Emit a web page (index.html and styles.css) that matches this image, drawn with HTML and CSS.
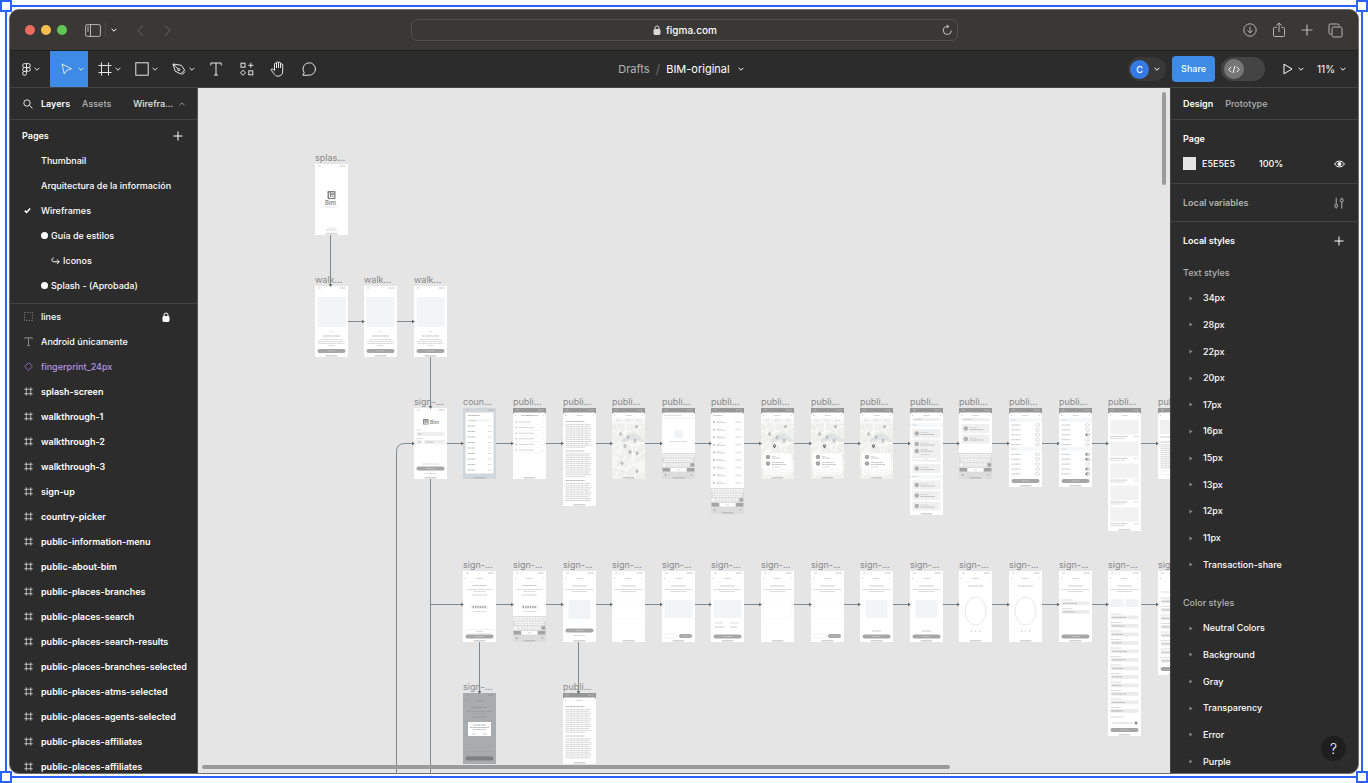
FILE: index.html
```html
<!DOCTYPE html>
<html lang="es">
<head>
    <meta charset="UTF-8">
    <title>BIM-original</title>
    <link rel="stylesheet" href="styles.css">
</head>
<body>
    <svg class="sprite" aria-hidden="true">
        <symbol id="i-chev" viewBox="0 0 6 6"><path d="M.6 1.8 3 4.2 5.4 1.8"/></symbol>
        <symbol id="i-up" viewBox="0 0 6 6"><path d="M.6 4.2 3 1.8 5.4 4.2"/></symbol>
        <symbol id="i-plus" viewBox="0 0 10 10"><path d="M5 .5v9M.5 5h9"/></symbol>
        <symbol id="i-frame" viewBox="0 0 14 14"><path d="M3.5.5v13M10.500.5v13M.5 3.500h13M.5 10.500h13"/></symbol>
        <symbol id="i-lock" viewBox="0 0 8 10"><path d="M2 5V3a2 2 0 0 1 4 0v2"/><rect x="1" y="4.500" width="6" height="5" rx=".6" fill="currentColor"/></symbol>
        <symbol id="i-caret" viewBox="0 0 4 5"><path d="M.5.5v4L3.5 2.500z" fill="currentColor" stroke="none"/></symbol>
    </svg>

    <div class="selection">
        <i class="handle tl"></i><i class="handle tr"></i><i class="handle bl"></i><i class="handle br"></i>
    </div>

    <div class="window">
        <header class="titlebar">
            <div class="title-left">
                <span class="light red"></span><span class="light yellow"></span><span class="light green"></span>
                <button class="sidebar-btn" aria-label="Sidebar">
                    <svg width="16" height="13" viewBox="0 0 16 13"><rect x=".6" y=".6" width="14.800" height="11.800" rx="1.500"/><path d="M5.500.6v11.800M2 3h2M2 5h2M2 7h2"/></svg>
                </button>
                <button class="sidebar-menu" aria-label="Tab groups"><svg class="chev"><use href="#i-chev"/></svg></button>
                <button class="nav-btn" aria-label="Back"><svg width="7" height="11" viewBox="0 0 7 11"><path d="M6 .5 1 5.500l5 5"/></svg></button>
                <button class="nav-btn" aria-label="Forward"><svg width="7" height="11" viewBox="0 0 7 11"><path d="m1 .5 5 5-5 5"/></svg></button>
            </div>
            <div class="address">
                <label for="url"><svg width="8" height="10"><use href="#i-lock"/></svg></label>
                <input id="url" type="text" value="figma.com" aria-label="Address">
                <button class="reload" aria-label="Reload"><svg width="11" height="12" viewBox="0 0 11 12"><path d="M6.500 2.500H5a4 4 0 1 0 4.300 4M4.800.6l2 1.900-2 2"/></svg></button>
            </div>
            <div class="title-right">
                <button aria-label="Downloads"><svg width="14" height="14" viewBox="0 0 14 14"><circle cx="7" cy="7" r="6.200"/><path d="M7 3.700v6M4.500 7.400 7 9.900l2.500-2.500"/></svg></button>
                <button aria-label="Share page"><svg width="14" height="16" viewBox="0 0 14 16"><path d="M4.500 5.500H2.500a1 1 0 0 0-1 1v7a1 1 0 0 0 1 1h9a1 1 0 0 0 1-1v-7a1 1 0 0 0-1-1h-2M7 10V1M4.300 3.500 7 .9l2.700 2.600"/></svg></button>
                <button aria-label="New tab"><svg width="12" height="12"><use href="#i-plus"/></svg></button>
                <button aria-label="Tabs"><svg width="15" height="15" viewBox="0 0 15 15"><rect x="4" y="4" width="10" height="10" rx="1.500"/><path d="M3.500 11H2.200A1.200 1.200 0 0 1 1 9.800V2.200A1.200 1.200 0 0 1 2.200 1h7.600A1.200 1.200 0 0 1 11 2.200v1.300"/></svg></button>
            </div>
        </header>

        <div class="toolbar">
            <div class="tools">
                <button class="tool menu" aria-label="Main menu">
                    <svg width="9" height="13" viewBox="0 0 9 13"><path d="M4.500.6H2.600a1.950 1.950 0 0 0 0 3.900h1.900zM4.500.6h1.900a1.950 1.950 0 0 1 0 3.900H4.500zM4.500 4.500H2.600a1.950 1.950 0 0 0 0 3.900h1.900zM4.500 8.400H2.600a1.950 1.950 0 1 0 1.900 2z"/><circle cx="6.400" cy="6.450" r="1.900"/></svg>
                    <svg class="chev"><use href="#i-chev"/></svg>
                </button>
                <button class="tool active" aria-label="Move">
                    <svg width="14" height="14" viewBox="0 0 14 14"><path d="m2 2 9.500 4.800-4.600 1.400L4.300 12z"/></svg>
                    <svg class="chev"><use href="#i-chev"/></svg>
                </button>
                <button class="tool" aria-label="Frame"><svg width="14" height="14"><use href="#i-frame"/></svg><svg class="chev"><use href="#i-chev"/></svg></button>
                <button class="tool" aria-label="Rectangle"><svg width="14" height="14" viewBox="0 0 14 14"><rect x=".8" y=".8" width="12.400" height="12.400"/></svg><svg class="chev"><use href="#i-chev"/></svg></button>
                <button class="tool" aria-label="Pen"><svg width="14" height="14" viewBox="0 0 14 14"><path d="m1 2 2.200 7.200L8.800 12 12.600 8 9.300 3.300zM1 2l5.200 5M10 12.800l3-3.200"/><circle cx="6.800" cy="7.600" r="1.100"/></svg><svg class="chev"><use href="#i-chev"/></svg></button>
                <button class="tool single" aria-label="Text"><svg width="14" height="14" viewBox="0 0 14 14"><path d="M1.800 3.500V1h10.400v2.500M7 1v12M5 13h4"/></svg></button>
                <button class="tool single" aria-label="Resources"><svg width="14" height="14" viewBox="0 0 14 14"><rect x="1" y="1.200" width="4" height="4"/><rect x="8.800" y="8.800" width="4" height="4"/><path d="M10.800.8v5M8.300 3.300h5M3 8.200 5.500 10.800 3 13.300.500 10.800z"/></svg></button>
                <button class="tool single" aria-label="Hand"><svg width="16" height="16" viewBox="0 0 16 16"><path d="M4.500 9.500V3.200a1 1 0 0 1 2 0V7V1.800a1 1 0 0 1 2 0V7V2.200a1 1 0 0 1 2 0V7V4a1 1 0 0 1 2.200 0v6c0 3.200-1.700 5.200-4.700 5.200-2.200 0-3.300-.9-4.300-2.700L1.300 9.200c-.5-1 .6-1.900 1.500-1.100z"/></svg></button>
                <button class="tool single" aria-label="Comment"><svg width="14" height="14" viewBox="0 0 14 14"><path d="M.8 13.200h6.400A6.200 6.200 0 1 0 1 7c0 1.200.4 2.500 1.200 3.600z"/></svg></button>
            </div>
            <nav class="file-name">
                <a href="#">Drafts</a><span class="slash">/</span>
                <button>BIM-original<svg class="chev"><use href="#i-chev"/></svg></button>
            </nav>
            <div class="actions">
                <button class="account"><span class="avatar">C</span><svg class="chev"><use href="#i-chev"/></svg></button>
                <button class="share">Share</button>
                <label class="dev-mode"><input type="checkbox" aria-label="Dev mode"><span class="knob"><svg width="12" height="9" viewBox="0 0 12 9"><path d="M3.300 1.800.700 4.500l2.600 2.700M8.700 1.800l2.600 2.700-2.600 2.700M6.900.9 5.100 8.100"/></svg></span></label>
                <button class="play" aria-label="Present"><svg width="10" height="12" viewBox="0 0 10 12"><path d="m1 1.200 8 4.800-8 4.800z"/></svg><svg class="chev"><use href="#i-chev"/></svg></button>
                <button class="zoom">11%<svg class="chev"><use href="#i-chev"/></svg></button>
            </div>
        </div>

        <main class="workspace">
            <aside class="panel left">
                <div class="tabs">
                    <svg class="row-icon search" width="10" height="10" viewBox="0 0 10 10"><circle cx="4" cy="4" r="3.200"/><path d="m6.400 6.400 3 3"/></svg>
                    <button class="on">Layers</button>
                    <button>Assets</button>
                    <button class="page-name">Wirefra...<svg class="chev"><use href="#i-up"/></svg></button>
                </div>
                <section class="pages">
                    <div class="pages-head"><h2>Pages</h2><button aria-label="Add page"><svg width="10" height="10"><use href="#i-plus"/></svg></button></div>
                    <ul>
                        <li>Thumbnail</li>
                        <li>Arquitectura de la información</li>
                        <li class="current"><svg class="check" width="7" height="7" viewBox="0 0 7 7"><path d="m.8 3.600 1.800 1.800 3.600-3.800"/></svg>Wireframes</li>
                        <li><i class="dot"></i>Guía de estilos</li>
                        <li class="nested"><svg width="9" height="8" viewBox="0 0 9 8"><path d="M2.800.8C.3 1.300.3 4.800 3 4.800h5M6 2.500l2.300 2.300L6 7.100"/></svg>Iconos</li>
                        <li><i class="dot"></i>Splash - (Aprobada)</li>
                    </ul>
                </section>
                <ul class="layers">
                    <li class="plain"><svg class="row-icon" width="9" height="9" viewBox="0 0 9 9"><path d="M.5.5h8v8h-8z" stroke-dasharray="1 1.660"/></svg>lines<svg class="lock" width="8" height="10"><use href="#i-lock"/></svg></li>
                    <li class="plain"><svg class="row-icon" width="9" height="9" viewBox="0 0 9 9"><path d="M.8 2V.8h7.400V2M4.500.8v7.700M3.300 8.500h2.400"/></svg>Android únicamente</li>
                    <li class="plain component"><svg class="row-icon" width="9" height="9" viewBox="0 0 9 9"><path d="M4.500.6 8.400 4.500 4.500 8.400.6 4.500z"/></svg>fingerprint_24px</li>
                    <li><svg class="row-icon" width="9" height="9"><use href="#i-frame"/></svg>splash-screen</li>
                    <li><svg class="row-icon" width="9" height="9"><use href="#i-frame"/></svg>walkthrough-1</li>
                    <li><svg class="row-icon" width="9" height="9"><use href="#i-frame"/></svg>walkthrough-2</li>
                    <li><svg class="row-icon" width="9" height="9"><use href="#i-frame"/></svg>walkthrough-3</li>
                    <li><svg class="row-icon" width="9" height="9"><use href="#i-frame"/></svg>sign-up</li>
                    <li><svg class="row-icon" width="9" height="9"><use href="#i-frame"/></svg>country-picker</li>
                    <li><svg class="row-icon" width="9" height="9"><use href="#i-frame"/></svg>public-information-menu</li>
                    <li><svg class="row-icon" width="9" height="9"><use href="#i-frame"/></svg>public-about-bim</li>
                    <li><svg class="row-icon" width="9" height="9"><use href="#i-frame"/></svg>public-places-branches</li>
                    <li><svg class="row-icon" width="9" height="9"><use href="#i-frame"/></svg>public-places-search</li>
                    <li><svg class="row-icon" width="9" height="9"><use href="#i-frame"/></svg>public-places-search-results</li>
                    <li><svg class="row-icon" width="9" height="9"><use href="#i-frame"/></svg>public-places-branches-selected</li>
                    <li><svg class="row-icon" width="9" height="9"><use href="#i-frame"/></svg>public-places-atms-selected</li>
                    <li><svg class="row-icon" width="9" height="9"><use href="#i-frame"/></svg>public-places-agents-selected</li>
                    <li><svg class="row-icon" width="9" height="9"><use href="#i-frame"/></svg>public-places-affiliates</li>
                    <li><svg class="row-icon" width="9" height="9"><use href="#i-frame"/></svg>public-places-affiliates</li>
                </ul>
            </aside>

            <div class="canvas">
                <div id="frames"></div>
                <svg id="connectors" class="connectors"></svg>
                <i class="scroll-v"></i>
                <i class="scroll-h"></i>
            </div>

            <aside class="panel right">
                <div class="tabs">
                    <button class="on">Design</button>
                    <button>Prototype</button>
                </div>
                <section class="page-fill">
                    <h2>Page</h2>
                    <div class="fill-row">
                        <i class="swatch"></i>
                        <input class="hex" type="text" value="E5E5E5" aria-label="Page color">
                        <input class="alpha" type="text" value="100%" aria-label="Opacity">
                        <button aria-label="Show in exports"><svg width="11" height="8" viewBox="0 0 11 8"><path d="M.6 4C2.800.2 8.200.2 10.400 4 8.200 7.800 2.800 7.800.600 4z"/><circle cx="5.500" cy="4" r="1.500" fill="currentColor"/></svg></button>
                    </div>
                </section>
                <section class="variables">
                    <h2>Local variables</h2>
                    <button aria-label="Edit variables"><svg width="10" height="12" viewBox="0 0 10 12"><path d="M2.200.8v6.400M2.200 10.400v1.200M7.800 11.600V5M7.800 1.800V.600"/><circle cx="2.200" cy="8.800" r="1.500"/><circle cx="7.800" cy="3.400" r="1.500"/></svg></button>
                </section>
                <section class="styles">
                    <div class="styles-head"><h2>Local styles</h2><button aria-label="Add style"><svg width="10" height="10"><use href="#i-plus"/></svg></button></div>
                    <h3>Text styles</h3>
                    <ul class="text-styles">
                        <li><svg class="caret"><use href="#i-caret"/></svg>34px</li>
                        <li><svg class="caret"><use href="#i-caret"/></svg>28px</li>
                        <li><svg class="caret"><use href="#i-caret"/></svg>22px</li>
                        <li><svg class="caret"><use href="#i-caret"/></svg>20px</li>
                        <li><svg class="caret"><use href="#i-caret"/></svg>17px</li>
                        <li><svg class="caret"><use href="#i-caret"/></svg>16px</li>
                        <li><svg class="caret"><use href="#i-caret"/></svg>15px</li>
                        <li><svg class="caret"><use href="#i-caret"/></svg>13px</li>
                        <li><svg class="caret"><use href="#i-caret"/></svg>12px</li>
                        <li><svg class="caret"><use href="#i-caret"/></svg>11px</li>
                        <li><svg class="caret"><use href="#i-caret"/></svg>Transaction-share</li>
                    </ul>
                    <h3>Color styles</h3>
                    <ul class="color-styles">
                        <li><svg class="caret"><use href="#i-caret"/></svg>Neutral Colors</li>
                        <li><svg class="caret"><use href="#i-caret"/></svg>Background</li>
                        <li><svg class="caret"><use href="#i-caret"/></svg>Gray</li>
                        <li><svg class="caret"><use href="#i-caret"/></svg>Transparency</li>
                        <li><svg class="caret"><use href="#i-caret"/></svg>Error</li>
                        <li><svg class="caret"><use href="#i-caret"/></svg>Purple</li>
                    </ul>
                </section>
                <button class="help" aria-label="Help">?</button>
            </aside>
        </main>
    </div>
    <script src="canvas.js"></script>
</body>
</html>
```

FILE: styles.css
```css
* {
    margin: 0;
    padding: 0;
    box-sizing: border-box;
}
body {
    height: 100vh;
    padding: 9px;
    background-color: #fff;
    font: 500 9px/12px Inter, "Liberation Sans", sans-serif;
    color: #fff;
    overflow: hidden;
}
button,
input {
    border: 0;
    background: none;
    font: inherit;
    color: inherit;
}
button {
    display: flex;
    align-items: center;
}
input {
    min-width: 0;
    outline: 0;
}
a {
    color: inherit;
    text-decoration: none;
}
ul {
    list-style: none;
}
h2,
h3 {
    font-size: 9px;
    font-weight: 600;
}
svg {
    flex: none;
    fill: none;
    stroke: currentColor;
}
.sprite {
    position: absolute;
    width: 0;
    height: 0;
}
.chev {
    width: 6px;
    height: 6px;
}

/* selection box round the window */
.selection {
    position: absolute;
    inset: 5px;
    border: 2px solid #2962ff;
}
.handle {
    position: absolute;
    width: 12px;
    height: 12px;
    border: 2px solid #2962ff;
    background-color: #fff;
}
.tl { left: -7px; top: -7px; }
.tr { right: -7px; top: -7px; }
.bl { left: -7px; bottom: -7px; }
.br { right: -7px; bottom: -7px; }

.window {
    position: relative;
    display: flex;
    flex-direction: column;
    height: 100%;
    border: 1px solid #6c6e6c;
    border-radius: 10px;
    background-color: #2c2c2c;
    overflow: hidden;
}

/* browser bar */
.titlebar {
    flex: none;
    display: grid;
    grid-template-columns: 1fr minmax(0, 547px) 1fr;
    align-items: center;
    height: 41px;
    border-bottom: 1px solid #1f1f1f;
    background-color: #3a3835;
}
.title-left,
.title-right {
    display: flex;
    align-items: center;
}
.title-left {
    padding-left: 15px;
}
.light {
    width: 10px;
    height: 10px;
    margin-right: 6px;
    border-radius: 50%;
}
.red { background-color: #ec6a5e; }
.yellow { background-color: #f4bf4f; }
.green { background-color: #61c554; }
.sidebar-btn {
    margin: 0 4px 0 12px;
    color: #b5b4b2;
}
.sidebar-menu {
    height: 14px;
    padding-left: 5px;
    border-left: 1px solid #4a4846;
    margin-right: 20px;
}
.nav-btn {
    margin-right: 20px;
    color: #6a6866;
}
.address {
    display: flex;
    align-items: center;
    height: 22px;
    border: 1px solid #52504e;
    border-radius: 6px;
    padding-right: 4px;
    font-size: 10px;
}
.address label {
    box-sizing: content-box;
    height: 10px;
    margin-left: auto;
    margin-right: 5px;
    padding-left: 20px;
    color: #d8d8d7;
}
.address input {
    width: 54px;
}
.reload {
    margin-left: auto;
    color: #c8c7c5;
}
.title-right {
    justify-content: flex-end;
    gap: 15px;
    padding-right: 15px;
    color: #b5b4b2;
}

/* toolbar */
.toolbar {
    flex: none;
    display: grid;
    grid-template-columns: 1fr auto 1fr;
    align-items: center;
    height: 37px;
    border-bottom: 1px solid #444;
    background-color: #2c2c2c;
}
.tools {
    display: flex;
}
.tool {
    width: 37px;
    height: 36px;
    padding-left: 10px;
    gap: 3px;
    color: #e6e6e6;
}
.tool.menu {
    width: 40px;
    padding-left: 12px;
}
.tool.active {
    width: 38px;
    gap: 4px;
    background-color: #3d8be4;
}
.tool.single {
    width: 31px;
    padding-left: 2px;
    justify-content: center;
}
.file-name {
    display: flex;
    align-items: center;
    font-size: 11px;
    font-weight: 400;
    color: #b3b3b3;
    padding-right: 6px;
}
.slash {
    margin: 0 6px;
    font-size: 13px;
    color: #666;
}
.file-name button {
    gap: 8px;
    color: #fff;
}
.actions {
    display: flex;
    align-items: center;
    justify-content: flex-end;
    padding-right: 12px;
}
.account {
    gap: 5px;
    height: 24px;
    padding: 0 6px 0 2px;
    border-radius: 12px;
    background-color: #383838;
    margin-right: 6px;
}
.avatar {
    width: 19px;
    border-radius: 50%;
    background-color: #3479e4;
    line-height: 19px;
    text-align: center;
}
.share {
    height: 26px;
    padding: 0 9px;
    border-radius: 4px;
    background-color: #3d8be4;
    margin-right: 6px;
}
.dev-mode {
    position: relative;
    width: 44px;
    height: 24px;
    padding: 2px 3px;
    border-radius: 12px;
    background-color: #444;
    margin-right: 18px;
}
.dev-mode input {
    position: absolute;
    inset: 0;
    opacity: 0;
}
.knob {
    display: flex;
    align-items: center;
    justify-content: center;
    width: 20px;
    height: 20px;
    border-radius: 50%;
    background-color: #767676;
}
.play {
    gap: 5px;
    margin-right: 13px;
}
.zoom {
    gap: 5px;
    font-size: 10px;
    font-weight: 400;
}

/* side panels */
.workspace {
    flex: 1;
    min-height: 0;
    display: flex;
}
.panel {
    position: relative;
    flex: none;
    width: 188px;
    overflow: hidden;
}
.left {
    border-right: 1px solid #555;
}
.right {
    border-left: 1px solid #444;
}
.tabs {
    display: flex;
    align-items: center;
    gap: 12px;
    height: 32px;
    padding: 0 12px;
    border-bottom: 1px solid #444;
    color: #b3b3b3;
}
.tabs .on {
    color: #fff;
    font-weight: 600;
}
.tabs .search {
    margin: 0 -4px 0 1px;
    color: #e6e6e6;
}
.page-name {
    flex: 1;
    justify-content: space-between;
    margin-left: 10px;
    color: #e6e6e6;
}
.page-name .chev {
    color: #999;
}
.pages {
    padding: 3px 0 5px;
    border-bottom: 1px solid #444;
}
.pages-head {
    display: flex;
    align-items: center;
    justify-content: space-between;
    height: 25px;
    padding: 0 14px 0 12px;
}
.pages li,
.layers li {
    display: flex;
    align-items: center;
    height: 25px;
    white-space: nowrap;
}
.pages li {
    padding-left: 31px;
}
.pages .current {
    padding-left: 14px;
    gap: 10px;
}
.check {
    stroke-width: 1.5;
}
.pages .nested {
    padding-left: 41px;
    gap: 3px;
}
.dot {
    width: 7px;
    height: 7px;
    border-radius: 50%;
    background-color: #fff;
    margin-right: 3px;
}
.layers li {
    padding: 0 27px 0 14px;
    gap: 8px;
    font-weight: 600;
}
.layers .plain {
    font-weight: 500;
}
.plain .row-icon {
    color: #8c8c8c;
}
.layers .component {
    color: #b494e6;
}
.component .row-icon {
    color: #8467b5;
}
.layers .lock {
    margin-left: auto;
}

.page-fill {
    height: 64px;
    padding: 6px 13px 0 12px;
    border-bottom: 1px solid #444;
}
.page-fill h2 {
    line-height: 25px;
}
.fill-row {
    display: flex;
    align-items: center;
    height: 25px;
}
.swatch {
    width: 13px;
    height: 13px;
    background-color: #e5e5e5;
    margin-right: 6px;
}
.hex {
    width: 57px;
}
.alpha {
    width: 40px;
}
.fill-row button {
    margin-left: auto;
}
.variables,
.styles-head {
    display: flex;
    align-items: center;
    justify-content: space-between;
    height: 38px;
    padding: 0 14px 0 12px;
}
.variables {
    border-bottom: 1px solid #444;
    color: #b3b3b3;
}
.styles h3 {
    padding-left: 12px;
    font-weight: 500;
    line-height: 25px;
    color: #b3b3b3;
}
.text-styles,
.color-styles {
    display: grid;
    grid-auto-rows: 1fr;
}
.text-styles {
    height: 293px;
    margin-bottom: 12px;
}
.color-styles {
    height: 160px;
}
.styles li {
    display: flex;
    align-items: center;
    gap: 10px;
    padding-left: 18px;
}
.caret {
    width: 4px;
    height: 5px;
    color: #8c8c8c;
}
.help {
    position: absolute;
    right: 12px;
    bottom: 12px;
    width: 25px;
    height: 25px;
    justify-content: center;
    border-radius: 50%;
    background-color: #1e1e1e;
    font-size: 14px;
    font-weight: 300;
}

/* canvas */
.canvas {
    position: relative;
    flex: 1;
    background-color: #e5e5e5;
    overflow: hidden;
}
.frame {
    position: absolute;
}
.frame svg {
    display: block;
    stroke: none;
}
.frame-label {
    position: absolute;
    left: 0;
    bottom: 100%;
    font-weight: 400;
    color: #8a8a8a;
}
.connectors {
    position: absolute;
    inset: 0;
    width: 100%;
    height: 100%;
    stroke: #82888c;
}
.scroll-v,
.scroll-h {
    position: absolute;
    border-radius: 3px;
    background-color: #9b9b9b;
}
.scroll-v {
    right: 4px;
    top: 4px;
    width: 4px;
    height: 93px;
}
.scroll-h {
    left: 4px;
    bottom: 4px;
    width: 77%;
    height: 4px;
}
```

FILE: canvas.js
```js
// every screen is 33px wide at this zoom
var W = 33;

function rect(x, y, w, h, fill, rx) {
    return '<rect x="' + x + '" y="' + y + '" width="' + w + '" height="' + h + '" rx="' + (rx || 0) + '" fill="' + fill + '"/>';
}
function outline(x, y, w, h, rx, color) {
    return '<rect x="' + x + '" y="' + y + '" width="' + w + '" height="' + h + '" rx="' + rx + '" fill="#fff" stroke="' + (color || '#e6e6e6') + '" stroke-width=".6"/>';
}
// greeked text
function line(x, y, w, color) {
    return '<path d="M' + x + ' ' + y + 'h' + w + '" stroke="' + (color || '#bbb') + '" stroke-opacity=".7" stroke-width=".8" stroke-dasharray="2.3 .3 1.2 .3 3.1 .4"/>';
}
function mid(y, w, color) {
    return line((W - w) / 2, y, w, color);
}
function circle(x, y, r, fill) {
    return '<circle cx="' + x + '" cy="' + y + '" r="' + r + '" fill="' + fill + '"/>';
}
function button(y, w, x) {
    x = x || 2.5;
    w = w || 28;
    return rect(x, y, w, 4, '#a6a6a6', 2) + line(x + w / 2 - 4, y + 2, 8, '#ddd');
}
function home(h) {
    return rect(10.5, h - 1.5, 12, 0.8, '#a5a5a5', 0.4);
}
function status(color) {
    return line(3, 2, 3, color || '#aaa') + line(25, 2, 5.5, color || '#888');
}
function darkStatus() {
    return rect(0, 0, W, 6, '#979797') + rect(0.5, 4.5, 32, 5, '#fff', 1) + status('#ddd');
}
function header(dark) {
    return (dark ? darkStatus() : status()) + line(2, 7.5, 1, '#999') + mid(7.5, 6, '#aaa') + line(30, 7.5, 1, '#bbb');
}
function logo(x, y, s) {
    return '<g transform="translate(' + x + ' ' + y + ') scale(' + s / 8 + ')">' + rect(0, 0, 8, 8, '#828282', 0.8) +
        '<path d="M2 1.500v5h4.300V4H4.200v2.500M3.500 1.800h3" fill="none" stroke="#fff" stroke-width=".9"/></g>';
}
function word(x, y, size) {
    return '<text x="' + x + '" y="' + y + '" font-size="' + size + '" font-weight="600" fill="#8a8a8a">Bim</text>';
}
function paragraphs(y, end) {
    var out = '', n = 0;
    for (; y < end; y += 1.9, n++) {
        if (n % 15 === 0) {
            out += line(2.5, y, 19, '#888');
            y += 1;
        } else if (n % 15 < 14) {
            out += line(2.5, y, n % 15 === 13 ? 20 : 26 - n % 3, '#b0b0b0');
        }
    }
    return out;
}
function keyboard(y) {
    var out = rect(0, y, W, 26, '#dcdcdc'), i;
    for (i = 0; i < 10; i++) out += rect(0.6 + i * 3.2, y + 1, 2.6, 3.4, '#f8f8f8', 0.4) + rect(1.5 + i * 3.2, y + 2.4, 0.8, 0.8, '#bbb');
    for (i = 0; i < 9; i++) out += rect(2.2 + i * 3.2, y + 5.6, 2.6, 3.4, '#f8f8f8', 0.4) + rect(3.1 + i * 3.2, y + 7, 0.8, 0.8, '#bbb');
    for (i = 0; i < 7; i++) out += rect(5.4 + i * 3.2, y + 10.2, 2.6, 3.4, '#f8f8f8', 0.4) + rect(6.3 + i * 3.2, y + 11.6, 0.8, 0.8, '#bbb');
    out += rect(0.6, y + 10.2, 3.6, 3.4, '#f8f8f8', 0.4) + rect(28.6, y + 10.2, 3.6, 3.4, '#a3a3a3', 0.4);
    out += rect(0.6, y + 15, 7.4, 3.6, '#a3a3a3', 0.4) + rect(8.8, y + 15, 15.4, 3.6, '#fff', 0.4) + rect(25, y + 15, 7.4, 3.6, '#a3a3a3', 0.4);
    out += line(14.5, y + 16.8, 4) + circle(3.6, y + 22, 0.9, '#aaa') + circle(29.4, y + 22, 0.7, '#aaa') + home(y + 26);
    return out;
}
function pin(x, y, color) {
    return '<path d="M' + x + ' ' + (y + 2.6) + 'l-1.300-2a1.500 1.500 0 1 1 2.600 0z" fill="' + color + '"/>' + circle(x, y - 0.4, 0.6, '#eee');
}
function map(h) {
    return rect(0, 15, W, h - 15, '#f0f0ee') +
        '<g fill="none" stroke="#fff" stroke-width="1"><path d="M0 22 8 26 14 24 33 18M0 40 10 32 20 38 33 34M4 15l6 18-3 12-7 9M14 15l-1 12 7 11 3 32M24 15l3 20-6 14-10 21M0 58l12 3 21-8M33 44 22 50M3 70l10-22"/></g>' +
        '<path d="M9 32 20 25l4 1 9 7-3 1-8-3-12 4z" fill="#e0e3e3"/><path d="M0 48l6-8 5 1-7 16H0zM24 58l9-5v10l-8 4z" fill="#f7f7f5"/>' +
        '<g fill="none" stroke="#dcdcda" stroke-width=".4"><path d="M2 20l6-3M12 27l-8 7M18 20l11 8M15 42l14 4M6 62l10 4M20 58l6 7M27 38l5 10M2 46l9 4"/></g>' +
        pin(24.5, 18.5, '#b5b5b5') + pin(8.500, 26, '#b5b5b5') + pin(16, 29, '#b5b5b5') + pin(23, 32.500, '#b5b5b5');
}
function chips() {
    return rect(0, 10, W, 5.5, '#fafafa') + outline(2, 11.2, 8, 2.8, 1.4) + outline(11.5, 11.2, 9, 2.8, 1.4) + outline(22, 11.2, 9, 2.8, 1.4) +
        line(4, 12.6, 4) + line(13.5, 12.6, 5) + line(24, 12.6, 5);
}
function verify() {
    return header() + mid(14.5, 14, '#999') + mid(18.5, 26) + mid(20.5, 12) + mid(24, 15, '#aaa') + rect(8, 34, 17, 4, '#f1f1f1', 1) +
        '<path d="M9.500 36h14" stroke="#999" stroke-width="1.500" stroke-dasharray="1.500 .9"/>' + mid(40.5, 13);
}
function intro() {
    return header() + mid(15, 14, '#999') + mid(18.5, 28) + mid(20.5, 16);
}
function place(y, tall) {
    return rect(2.5, y, 28, tall ? 22 : 9, '#f0f0f0', 1) + circle(6.8, y + 4.5, 2.3, '#b0b0b0') + line(10.5, y + 3.5, 8) + line(10.5, y + 5.5, 14, '#999') +
        (tall ? circle(6.8, y + 11.5, 2.3, '#b0b0b0') + line(10.5, y + 10, 7) + line(10.5, y + 11.800, 13, '#999') + line(10.5, y + 15, 9) +
        outline(4, y + 18, 11, 2.6, 1.3) + outline(17, y + 18, 11, 2.6, 1.3) : '');
}
function fields(from, to) {
    var out = '';
    for (var y = from; y < to; y += 8.5) {
        out += line(2.5, y, 11) + rect(2.5, y + 1.5, 28, 3.8, '#ececec', 0.8) + line(4, y + 3.4, 15 - y % 7, '#999');
    }
    return out;
}

var screens = {
    splash: function(h) {
        return status() + logo(12.5, 27, 8) + word(10, 41, 6) + mid(43, 12, '#ccc') + mid(64, 8, '#ccc') + mid(66, 11, '#aaa') + home(h);
    },
    walk: function(h) {
        return status() + rect(2.5, 11, 28, 30, '#f3f4f5', 1) + mid(45.5, 4, '#ccc') + mid(50, 17, '#888') +
            mid(53.5, 22) + mid(55.5, 27) + mid(57.5, 26) + mid(59.5, 6) + button(63) + home(h);
    },
    signup: function(h) {
        return status() + logo(9, 11, 5.5) + word(16, 16, 5) + line(2.5, 22, 5) + rect(2.5, 24, 28, 4, '#efefef', 0.6) + line(4, 26, 4, '#999') +
            line(2.500, 30.5, 6) + rect(2.5, 32, 6, 4, '#efefef', 0.6) + rect(10, 32, 20.500, 4, '#efefef', 0.6) + line(4, 34, 3, '#999') + line(11.5, 34, 8, '#999') +
            mid(56, 17) + button(58.500) + mid(65.5, 11) + home(h);
    },
    country: function(h) {
        var out = rect(0, 0, W, h, '#d1d6db') + status() + rect(2.5, 4.5, 28, 61, '#fff', 0.8) + line(5, 7.5, 12, '#888') + rect(4.5, 11, 24, 3, '#f4f6f8', 1) + line(6, 12.5, 8);
        for (var y = 18; y < 64; y += 5.5) out += line(4.5, y, 8, '#888') + line(25, y, 3.500);
        return out + home(h);
    },
    menu: function(h) {
        var out = header(true) + mid(7.5, 17, '#999');
        for (var y = 14; y < 43; y += 5.600) out += circle(3.2, y, 0.8, '#bbb') + line(5.8, y, y % 2 ? 15 : 12, '#aaa') + line(29.5, y, 1) + rect(5.8, y + 2.700, 25, 0.2, '#ddd');
        return out + home(h);
    },
    about: function(h) {
        return header(true) + paragraphs(13.500, h - 5) + home(h);
    },
    map: function(h) {
        return header(true) + map(h) + chips() + pin(13, 38, '#b5b5b5') + pin(18, 44, '#aaa') + pin(25, 45, '#b5b5b5') + pin(10, 55, '#b5b5b5') + pin(25, 63, '#b5b5b5') + home(h);
    },
    search: function(h) {
        return darkStatus() + line(2, 7.5, 18, '#bbb') + line(29.500, 7.5, 1) + rect(0, 10, W, 0.4, '#e5e5e5') + rect(12, 22, 9, 8, '#f1f3f4', 1.500) + mid(33.5, 17) + keyboard(45);
    },
    results: function(h) {
        var out = darkStatus() + line(2, 7.5, 9, '#999');
        for (var y = 14; y < 78; y += 7.6) out += circle(3, y, 0.9, '#aaa') + line(5.5, y - 0.8, 5) + line(5.5, y + 0.6, 9, '#aaa') + rect(24, y - 1, 6.500, 2, '#eaeaea', 1);
        return out + keyboard(h - 26);
    },
    mapcard: function(h) {
        return header(true) + map(h) + chips() + pin(13.5, 38, '#666') + rect(2.5, 45.5, 28, 21, '#fff', 1) +
            circle(7, 49, 2.3, '#a5a5a5') + line(11, 48.500, 4) + line(11, 50, 8, '#999') + circle(7, 55.500, 2.3, '#a5a5a5') + line(11, 54.5, 12, '#999') + line(11, 56.5, 14, '#999') + line(11, 59, 8) +
            outline(4, 62, 11.500, 3, 1.5) + outline(17.5, 62, 11.500, 3, 1.5) + home(h);
    },
    affiliates: function(h) {
        return header(true) + rect(2.5, 10, 28, 3, '#f0f0f0', 1) + line(4, 11.5, 8) + rect(0, 15, W, 4, '#f6f7f8') + line(2.5, 17, 5) +
            place(21) + place(31.500, true) + place(56) + rect(0, 67, W, 3.500, '#f6f7f8') + line(2.5, 68.5, 5) + place(72.5) + place(83) + place(93.500) + home(h);
    },
    affsearch: function(h) {
        return header(true) + rect(2.5, 10, 28, 3, '#f0f0f0', 1) + line(4, 11.5, 10) + place(16) + place(26.500) + keyboard(45);
    },
    filter: function(h, on) {
        var out = header(true) + rect(0, 10, W, 4, '#f6f7f8') + rect(0, 39, W, 4, '#f6f7f8') + line(2.5, 12, 5) + line(2.5, 41, 5);
        for (var i = 0; i < 10; i++) {
            var y = 17 + i * 4.9 + (i > 4 ? 4.8 : 0);
            out += line(2.500, y, 9, '#999') + outline(26.5, y - 1.3, 4, 2.6, 1.3, '#c4c4c4');
            if (on && (i === 2 || i === 5 || i === 6 || i > 7)) out += rect(26.5, y - 1.3, 4, 2.6, '#888', 1.3) + circle(29.2, y, 1, '#fff');
        }
        return out + button(71) + home(h);
    },
    promos: function(h) {
        var out = header(true);
        for (var y = 12; y < h - 10; y += 21.8) out += rect(2.500, y, 28, 14.5, '#f2f2f2', 1) + line(2.5, y + 16.5, 17, '#999') + line(26, y + 16.5, 5) + line(2.5, y + 18.500, 14);
        return out + home(h);
    },
    detail: function(h) {
        return header(true) + rect(2, 12, 29, 14, '#f0f0f0', 1) + line(2, 29, 27, '#999') + paragraphs(34, 60) + outline(2.5, 63, 28, 4, 2);
    },
    verify: function(h) {
        return verify() + outline(2.5, 58.500, 28, 4, 2) + mid(60.5, 7) + button(63.5) + home(h);
    },
    verifykey: function() {
        return verify() + keyboard(45);
    },
    modal: function(h) {
        return verify() + outline(2.5, 58.5, 28, 4, 2) + rect(0, 0, W, h, 'rgba(122,128,132,.65)') +
            rect(2.5, 63.5, 28, 4, '#7c8082', 2) + rect(5, 29, 23, 14, '#fff', 1) + mid(32, 13, '#777') + mid(34.5, 19, '#888') + mid(36.5, 13, '#999') + line(9.500, 41, 3, '#888') + line(20, 41, 4, '#999');
    },
    upload: function(h) {
        return intro() + rect(5.5, 29, 22, 19, '#f1f3f4', 1) + button(57.500) + mid(64.5, 11) + home(h);
    },
    empty: function(h) {
        return intro() + outline(2.5, 29, 28, 18, 1, '#f6f6f6') + home(h);
    },
    pills: function(h) {
        return intro() + rect(2.5, 29, 28, 18, '#f3f4f5', 1) + outline(2.5, 63, 13, 4, 2) + button(63, 13, 17) + home(h);
    },
    nextpill: function(h) {
        return intro() + outline(2.5, 29, 28, 18, 1, '#f6f6f6') + outline(2.5, 63, 13, 4, 2) + button(63, 13, 17) + home(h);
    },
    info: function(h) {
        return intro() + rect(2.5, 29, 28, 18, '#f3f4f5', 1) + line(4, 52, 8) + line(19, 52, 9) + line(4, 56, 9, '#999') + line(19, 56, 7, '#999') + button(63.5) + home(h);
    },
    photo: function(h) {
        return intro() + rect(5.5, 29, 22, 18, '#f3f4f5', 1) + mid(60, 9, '#999') + button(63.5) + home(h);
    },
    face: function(h) {
        return header() + mid(15, 15, '#999') + '<ellipse cx="16.500" cy="40" rx="10.500" ry="14" fill="#fff" stroke="#ddd" stroke-width=".7"/>' +
            circle(12.500, 60, 0.8, '#ccc') + circle(16.5, 60, 0.8, '#ccc') + circle(20.5, 60, 0.8, '#ccc') + home(h);
    },
    form: function(h) {
        return intro() + fields(29, 45) + button(63.500) + home(h);
    },
    longform: function(h) {
        return intro() + rect(2.5, 28, 13, 8, '#f1f3f4', 1) + rect(17.5, 28, 13, 8, '#f1f3f4', 1) + fields(43, h - 28) +
            line(2.5, h - 25, 10, '#aaa') + line(2.5, h - 19, 13, '#aaa') + line(4, h - 13, 21, '#aaa') + circle(28, h - 13, 1.500, '#888') + button(h - 8) + home(h);
    },
    sideform: function(h) {
        return header() + line(3, 21, 14) + fields(27, h - 14) + button(h - 8) + home(h);
    }
};

// label, column, top, height, screen
var frames = [
    ['splas...', 0, 76, 71, 'splash'],
    ['walk...', 0, 198, 71, 'walk'],
    ['walk...', 1, 198, 71, 'walk'],
    ['walk...', 2, 198, 71, 'walk'],

    ['sign-...', 2, 320, 71, 'signup'],
    ['coun...', 3, 320, 71, 'country'],
    ['publi...', 4, 320, 71, 'menu'],
    ['publi...', 5, 320, 98, 'about'],
    ['publi...', 6, 320, 71, 'map'],
    ['publi...', 7, 320, 71, 'search'],
    ['publi...', 8, 320, 106, 'results'],
    ['publi...', 9, 320, 71, 'mapcard'],
    ['publi...', 10, 320, 71, 'mapcard'],
    ['publi...', 11, 320, 71, 'mapcard'],
    ['publi...', 12, 320, 107, 'affiliates'],
    ['publi...', 13, 320, 71, 'affsearch'],
    ['publi...', 14, 320, 79, 'filter'],
    ['publi...', 15, 320, 79, 'filter', true],
    ['publi...', 16, 320, 123, 'promos'],
    ['publi...', 17, 320, 71, 'detail'],

    ['sign-...', 3, 483, 71, 'verify'],
    ['sign-...', 4, 483, 71, 'verifykey'],
    ['sign-...', 5, 483, 71, 'upload'],
    ['sign-...', 6, 483, 71, 'empty'],
    ['sign-...', 7, 483, 71, 'pills'],
    ['sign-...', 8, 483, 71, 'info'],
    ['sign-...', 9, 483, 71, 'empty'],
    ['sign-...', 10, 483, 71, 'nextpill'],
    ['sign-...', 11, 483, 71, 'photo'],
    ['sign-...', 12, 483, 71, 'photo'],
    ['sign-...', 13, 483, 71, 'face'],
    ['sign-...', 14, 483, 71, 'face'],
    ['sign-...', 15, 483, 71, 'form'],
    ['sign-...', 16, 483, 165, 'longform'],
    ['sign-...', 17, 483, 104, 'sideform'],

    ['sign-...', 3, 605, 71, 'modal'],
    ['publi...', 5, 605, 71, 'about']
];

function columnX(col) {
    return Math.round(116.5 + col * 49.6);
}

document.getElementById('frames').innerHTML = frames.map(function(f) {
    return '<div class="frame" style="left:' + columnX(f[1]) + 'px;top:' + f[2] + 'px">' +
        '<span class="frame-label">' + f[0] + '</span>' +
        '<svg width="' + W + '" height="' + f[3] + '">' + rect(0, 0, W, f[3], '#fff') + screens[f[4]](f[3], f[5]) + '</svg></div>';
}).join('');

// connectors
function head(x, y, d) {
    return '<path d="M' + x + ' ' + y + d + '" fill="#666c70" stroke="none"/>';
}
function arrow(x1, x2, y) {
    return '<path d="M' + x1 + ' ' + y + 'H' + x2 + '"/>' + head(x2 + 1, y, 'l-3-1.800v3.600z');
}
function arrowDown(x, y1, y2) {
    return '<path d="M' + x + ' ' + y1 + 'V' + y2 + '"/>' + head(x, y2 + 1, 'l-1.800-3h3.600z');
}
var lines = '', c;
for (c = 0; c < 2; c++) lines += arrow(columnX(c) + W, columnX(c + 1), 233.5);
for (c = 2; c < 17; c++) lines += arrow(columnX(c) + W, columnX(c + 1), 355.5);
for (c = 3; c < 17; c++) lines += arrow(columnX(c) + W, columnX(c + 1), 516.5);
lines += arrow(232, columnX(3), 516.5);
lines += arrowDown(132.5, 147, 198) + arrowDown(232.5, 269, 320) + arrowDown(281.5, 554, 605) + arrowDown(380.5, 554, 605);
lines += '<path d="M232.5 391V685M198.5 685V364q0-8.500 8.500-8.500H216"/>' + head(217, 355.5, 'l-3-1.800v3.600z');
document.getElementById('connectors').innerHTML = lines;
```
